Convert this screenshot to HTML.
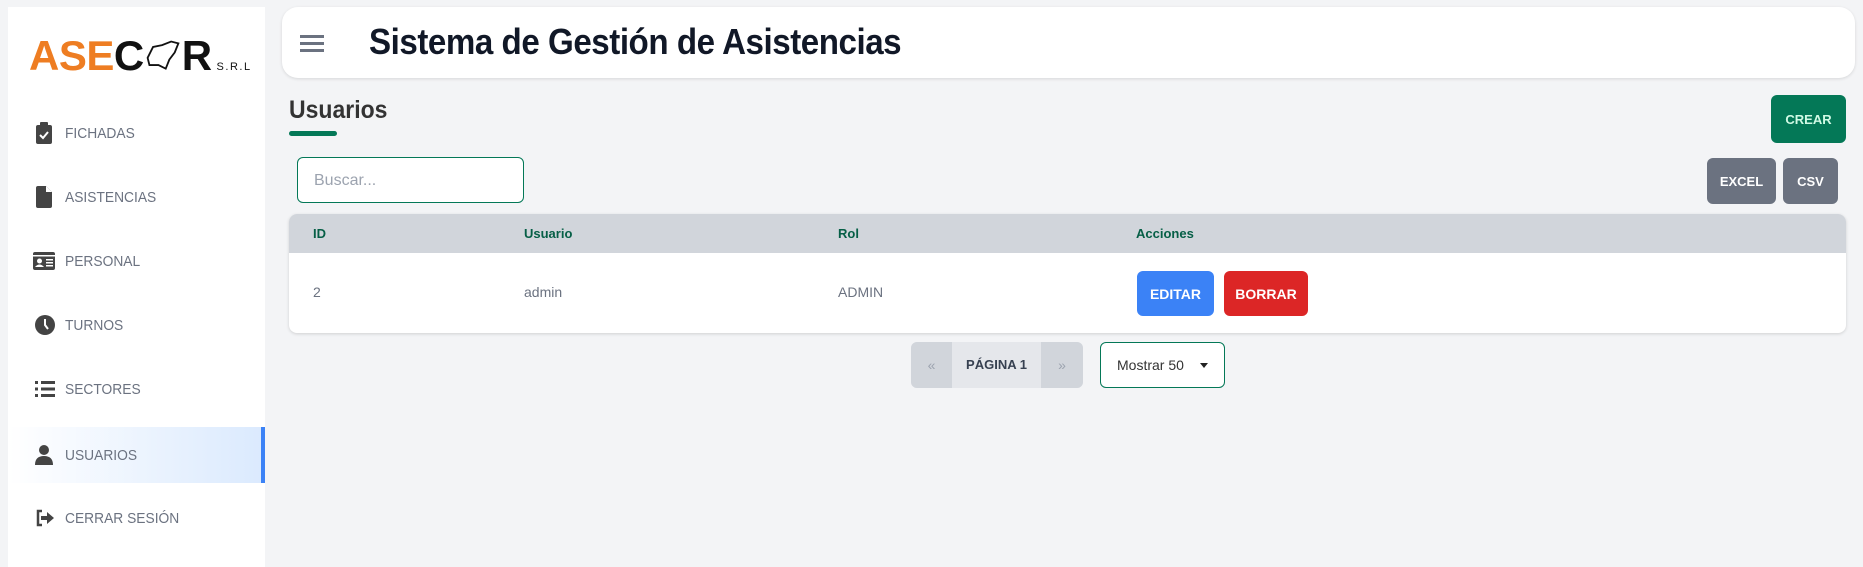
<!DOCTYPE html>
<html><head><meta charset="utf-8"><style>
*{box-sizing:border-box;margin:0;padding:0}
body{width:1863px;height:554px;background:#f3f4f6;font-family:"Liberation Sans",sans-serif;position:relative;overflow:hidden}
.abs{position:absolute}
.side{left:8px;top:7px;width:257px;height:560px;background:#fff}
.nav{position:absolute;left:0;width:257px;height:56px;display:flex;align-items:center;color:#6b7280;font-size:15px}
.nav svg{position:absolute;left:27px}
.nav span{position:absolute;left:57px;transform:scaleX(.92);transform-origin:left}
.act{background:linear-gradient(90deg,#fff,#dbeafe);border-right:4px solid #3b82f6}
.btn{position:absolute;color:#fff;font-weight:bold;font-size:14px;display:flex;align-items:center;justify-content:center;border-radius:6px}
.th{position:absolute;top:14px;font-size:13px;font-weight:bold;color:#065f46}
.td{position:absolute;top:30px;font-size:14px;color:#6b7280}
</style></head><body>
<div class="abs side">
  <div class="abs" style="left:21px;top:24px;font-size:42px;font-weight:bold;letter-spacing:-.5px;white-space:nowrap;line-height:50px">
    <span style="color:#ee7d22">ASE</span><span style="color:#111">C</span><svg width="38" height="36" viewBox="0 0 42 36" style="display:inline-block;vertical-align:-4px"><path d="M4 20 L10 8 L20 6 L30 2 L38 4 L34 14 L28 22 L24 32 L16 28 L6 28 Z" fill="none" stroke="#111" stroke-width="2"/></svg><span style="color:#111">R</span><span style="font-size:11px;color:#111;margin-left:5px;letter-spacing:1.5px;font-weight:normal">S.R.L</span>
  </div>
  <div class="nav" style="top:98px"><svg width="18" height="22" viewBox="0 0 18 22"><rect x="1" y="3" width="16" height="19" rx="2" fill="#444"/><rect x="5" y="0" width="8" height="5" rx="1" fill="#444"/><path d="M5 13 L8 16 L13 10" stroke="#fff" stroke-width="2" fill="none"/></svg><span>FICHADAS</span></div>
  <div class="nav" style="top:162px"><svg width="18" height="22" viewBox="0 0 18 22"><path d="M1 2 Q1 0 3 0 H11 L17 6 V20 Q17 22 15 22 H3 Q1 22 1 20Z" fill="#444"/><path d="M11 0 V6 H17" fill="#fff"/></svg><span>ASISTENCIAS</span></div>
  <div class="nav" style="top:226px"><svg width="22" height="18" viewBox="0 0 22 18" style="left:25px"><rect x="0" y="0" width="22" height="18" rx="2" fill="#444"/><rect x="0" y="3" width="22" height="1.5" fill="#fff"/><circle cx="6.5" cy="9" r="2.5" fill="#fff"/><path d="M2 15 Q6.5 10 11 15Z" fill="#fff"/><rect x="13" y="7" width="7" height="1.5" fill="#fff"/><rect x="13" y="10" width="7" height="1.5" fill="#fff"/><rect x="13" y="13" width="7" height="1.5" fill="#fff"/></svg><span>PERSONAL</span></div>
  <div class="nav" style="top:290px"><svg width="20" height="20" viewBox="0 0 20 20"><circle cx="10" cy="10" r="10" fill="#444"/><path d="M10 4 V10 L13 14" stroke="#fff" stroke-width="2" fill="none"/></svg><span>TURNOS</span></div>
  <div class="nav" style="top:354px"><svg width="20" height="16" viewBox="0 0 20 16"><g fill="#444"><rect x="0" y="0" width="3" height="3"/><rect x="0" y="6.5" width="3" height="3"/><rect x="0" y="13" width="3" height="3"/><rect x="6" y="0" width="14" height="3"/><rect x="6" y="6.5" width="14" height="3"/><rect x="6" y="13" width="14" height="3"/></g></svg><span>SECTORES</span></div>
  <div class="nav act" style="top:420px"><svg width="18" height="20" viewBox="0 0 18 20"><circle cx="9" cy="5" r="5" fill="#444"/><path d="M0 20 Q0 11 9 11 Q18 11 18 20Z" fill="#444"/></svg><span>USUARIOS</span></div>
  <div class="nav" style="top:483px"><svg width="20" height="18" viewBox="0 0 20 18"><path d="M7 2 H3 V16 H7" stroke="#444" stroke-width="2.5" fill="none"/><path d="M6 7 H12 V3 L19 9 L12 15 V11 H6Z" fill="#444"/></svg><span>CERRAR SESIÓN</span></div>
</div>

<div class="abs" style="left:282px;top:7px;width:1573px;height:71px;background:#fff;border-radius:16px;box-shadow:0 1px 3px rgba(0,0,0,.12)">
  <svg class="abs" style="left:18px;top:28px" width="24" height="18" viewBox="0 0 24 18"><g fill="#6b7280"><rect y="0" width="24" height="3"/><rect y="7" width="24" height="3"/><rect y="14" width="24" height="3"/></g></svg>
  <div class="abs" style="left:87px;top:14px;font-size:36px;font-weight:bold;color:#111827;white-space:nowrap;transform:scaleX(.92);transform-origin:left;letter-spacing:-.5px">Sistema de Gestión de Asistencias</div>
</div>

<div class="abs" style="left:289px;top:96px;font-size:25px;font-weight:bold;color:#333;transform:scaleX(.92);transform-origin:left">Usuarios</div>
<div class="abs" style="left:289px;top:131px;width:48px;height:5px;border-radius:3px;background:#047857"></div>
<div class="btn" style="left:1771px;top:95px;width:75px;height:48px;background:#047857;color:#d1fae5;font-size:13px">CREAR</div>

<div class="abs" style="left:297px;top:157px;width:227px;height:46px;border:1px solid #047857;border-radius:6px;background:#fff;font-size:16px;color:#9ca3af;padding:14px 0 0 16px">Buscar...</div>
<div class="btn" style="left:1707px;top:158px;width:69px;height:46px;background:#6b7280;font-size:13px">EXCEL</div>
<div class="btn" style="left:1783px;top:158px;width:55px;height:46px;background:#6b7280;font-size:13px">CSV</div>

<div class="abs" style="left:289px;top:214px;width:1557px;height:119px;background:#fff;border-radius:8px;box-shadow:0 1px 3px rgba(0,0,0,.15);overflow:hidden">
  <div class="abs" style="left:0;top:0;width:100%;height:39px;background:#d1d5db"></div>
  <div class="th" style="left:24px;top:12px">ID</div><div class="th" style="left:235px;top:12px">Usuario</div><div class="th" style="left:549px;top:12px">Rol</div><div class="th" style="left:847px;top:12px">Acciones</div>
  <div class="td" style="top:70px;left:24px">2</div><div class="td" style="top:70px;left:235px">admin</div><div class="td" style="top:70px;left:549px">ADMIN</div>
  <div class="btn" style="left:848px;top:57px;width:77px;height:45px;background:#3b82f6">EDITAR</div>
  <div class="btn" style="left:935px;top:57px;width:84px;height:45px;background:#dc2626">BORRAR</div>
</div>

<div class="abs" style="left:911px;top:342px;width:172px;height:46px;border-radius:6px;overflow:hidden;background:#e5e7eb">
  <div class="abs" style="left:0;top:0;width:41px;height:46px;background:#d1d5db;color:#9ca3af;text-align:center;line-height:46px;font-size:14px">«</div>
  <div class="abs" style="left:41px;top:0;width:89px;height:46px;text-align:center;line-height:46px;font-size:13px;font-weight:bold;color:#374151">PÁGINA 1</div>
  <div class="abs" style="left:130px;top:0;width:42px;height:46px;background:#d1d5db;color:#9ca3af;text-align:center;line-height:46px;font-size:14px">»</div>
</div>
<div class="abs" style="left:1100px;top:342px;width:125px;height:46px;border:1px solid #047857;border-radius:6px;background:#fff;font-size:14px;color:#333;padding:14px 0 0 16px">Mostrar 50<span class="abs" style="left:99px;top:20px;width:0;height:0;border-left:4px solid transparent;border-right:4px solid transparent;border-top:5px solid #222"></span></div>
</body></html>
